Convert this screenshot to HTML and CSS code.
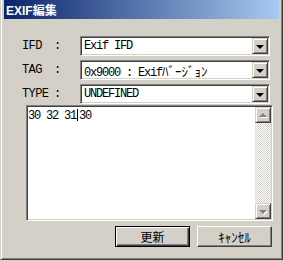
FILE: index.html
```html
<!DOCTYPE html>
<html lang="ja">

<head>
    <meta charset="UTF-8">
    <title>EXIF編集</title>
    <link rel="stylesheet" href="styles.css">
</head>

<body>
    <div class="window">
        <div class="titlebar"><span class="title">EXIF編集</span></div>
        <div class="content">
            <div class="fields">
                <span class="label">IFD</span><span class="colon">:</span>
                <div class="combo">
                    <span class="value">Exif IFD</span>
                    <span class="drop"><span class="arrow"></span></span>
                </div>
                <span class="label">TAG</span><span class="colon">:</span>
                <div class="combo">
                    <span class="value">0x9000 : Exif<span class="kana">ﾊﾞｰｼﾞｮﾝ</span></span>
                    <span class="drop"><span class="arrow"></span></span>
                </div>
                <span class="label">TYPE</span><span class="colon">:</span>
                <div class="combo">
                    <span class="value">UNDEFINED</span>
                    <span class="drop"><span class="arrow"></span></span>
                </div>
            </div>
            <div class="memo">
                <div class="memo-text">30 32 31<span class="caret"></span>30</div>
                <div class="vscroll">
                    <span class="sbtn"><span class="tri up"></span></span>
                    <span class="track"></span>
                    <span class="sbtn"><span class="tri down"></span></span>
                </div>
            </div>
            <div class="buttons">
                <button class="btn default">更新</button>
                <button class="btn"><span class="kana">ｷｬﾝｾﾙ</span></button>
            </div>
        </div>
    </div>
</body>

</html>
```

FILE: styles.css
```css
body {
    margin: 0;
    background: #d4d0c8;
    font-family: "Liberation Mono", "Noto Sans CJK JP", monospace;
    font-size: 11px;
}

.window {
    width: 283px;
    height: 260px;
    box-sizing: border-box;
    background: #d4d0c8;
    border-left: 1px solid #d4d0c8;
    border-right: 1px solid #404040;
    border-bottom: 1px solid #404040;
    box-shadow: inset 1px 0 #fff, inset -1px -1px #808080;
    padding: 0 3px 2px 2px;
}

.titlebar {
    height: 19px;
    margin-left: 1px;
    background: linear-gradient(to right, #0a246a, #a6caf0);
    display: flex;
    align-items: center;
    padding-left: 2px;
}

.title {
    color: #fff;
    font-family: "Liberation Sans", "Noto Sans CJK JP", sans-serif;
    font-weight: bold;
    font-size: 12px;
}

.content {
    padding: 17px 0 0 18px;
}

.fields {
    display: grid;
    grid-template-columns: 32px 27px 190px;
    grid-auto-rows: 20px;
    row-gap: 4px;
    align-items: center;
}

.label,
.colon {
    letter-spacing: -0.6px;
    font-size: 12px;
    padding-left: 1px;
}

.combo {
    height: 20px;
    box-sizing: border-box;
    background: #fff;
    border: 1px solid;
    border-color: #808080 #fff #fff #808080;
    box-shadow: inset 1px 1px #404040, inset -1px -1px #d4d0c8;
    display: flex;
    align-items: center;
    padding: 1px;
}

.value {
    flex: 1;
    padding-left: 2px;
    font-size: 12px;
    letter-spacing: -1.2px;
    white-space: nowrap;
}

.kana {
    font-family: "Noto Sans CJK JP", sans-serif;
    font-size: 13px;
    letter-spacing: 0;
}

.drop,
.sbtn {
    width: 16px;
    height: 16px;
    box-sizing: border-box;
    background: #d4d0c8;
    border: 1px solid;
    border-color: #d4d0c8 #404040 #404040 #d4d0c8;
    box-shadow: inset 1px 1px #fff, inset -1px -1px #808080;
    display: flex;
    align-items: center;
    justify-content: center;
}

.arrow {
    width: 0;
    height: 0;
    border-left: 4px solid transparent;
    border-right: 4px solid transparent;
    border-top: 4px solid #000;
    margin-top: 1px;
}

.memo {
    width: 247px;
    height: 116px;
    margin: 1px 0 0 5px;
    box-sizing: border-box;
    background: #fff;
    border: 1px solid;
    border-color: #808080 #fff #fff #808080;
    box-shadow: inset 1px 1px #404040, inset -1px -1px #d4d0c8;
    padding: 1px;
    display: flex;
}

.memo-text {
    flex: 1;
    padding: 2px 0 0 0;
    font-size: 12px;
    letter-spacing: -1.2px;
    white-space: pre;
}

.caret {
    display: inline-block;
    width: 0;
    height: 12px;
    border-left: 1px solid #000;
    vertical-align: -2px;
    margin: 0 1px;
}

.vscroll {
    width: 16px;
    display: flex;
    flex-direction: column;
}

.track {
    flex: 1;
    background: repeating-conic-gradient(#fff 0 25%, #d4d0c8 0 50%) 0 0 / 2px 2px;
}

.tri {
    width: 0;
    height: 0;
    border-left: 4px solid transparent;
    border-right: 4px solid transparent;
    filter: drop-shadow(1px 1px 0 #fff);
}

.tri.up {
    border-bottom: 4px solid #808080;
}

.tri.down {
    border-top: 4px solid #808080;
    margin-top: 1px;
}

.buttons {
    display: flex;
    justify-content: flex-end;
    gap: 7px;
    margin: 5px 0 0 0;
    padding-right: 7px;
}

.btn {
    width: 75px;
    height: 21px;
    box-sizing: border-box;
    background: #d4d0c8;
    border: 1px solid;
    border-color: #fff #404040 #404040 #fff;
    box-shadow: inset -1px -1px #808080;
    font-family: "Noto Sans CJK JP", sans-serif;
    font-size: 12px;
    color: #000;
    padding: 0;
    line-height: 17px;
}

.btn.default {
    border: 1px solid #000;
    box-shadow: inset 1px 1px #fff, inset -1px -1px #404040, inset -2px -2px #808080;
}
```
